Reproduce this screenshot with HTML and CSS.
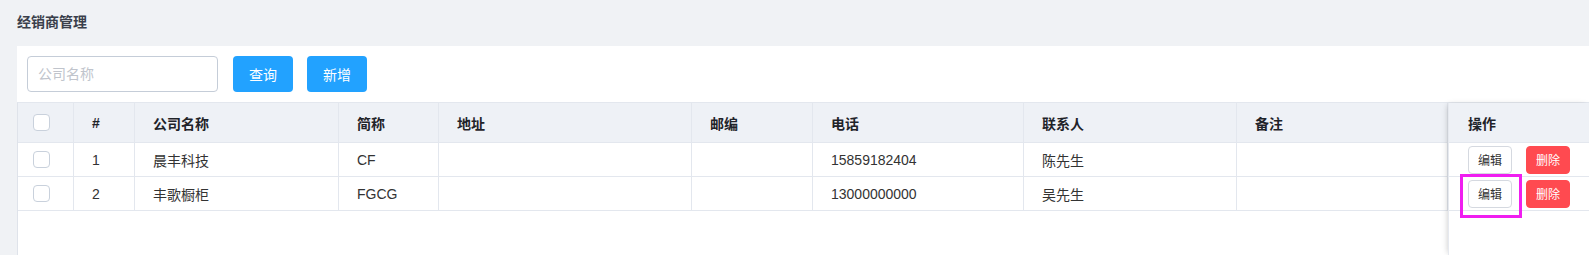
FILE: index.html
```html
<!DOCTYPE html>
<html lang="zh-CN">
<head>
<meta charset="utf-8">
<title>经销商管理</title>
<link rel="stylesheet" href="styles.css">
</head>
<body>
<div class="page">
  <div class="title">经销商管理</div>
  <div class="card">
    <div class="search">
      <input class="input" type="text" placeholder="公司名称">
      <button class="btn btn-primary">查询</button>
      <button class="btn btn-primary btn-add">新增</button>
    </div>
    <div class="table-wrap">
      <div class="main">
        <table class="grid">
          <colgroup>
            <col class="c1"><col class="c2"><col class="c3"><col class="c4"><col class="c5"><col class="c6"><col class="c7"><col class="c8"><col class="c9">
          </colgroup>
          <thead>
            <tr>
              <th class="chk-cell"><span class="checkbox"></span></th>
              <th>#</th>
              <th>公司名称</th>
              <th>简称</th>
              <th>地址</th>
              <th>邮编</th>
              <th>电话</th>
              <th>联系人</th>
              <th>备注</th>
            </tr>
          </thead>
          <tbody>
            <tr>
              <td class="chk-cell"><span class="checkbox"></span></td>
              <td>1</td>
              <td>晨丰科技</td>
              <td>CF</td>
              <td></td>
              <td></td>
              <td>15859182404</td>
              <td>陈先生</td>
              <td></td>
            </tr>
            <tr>
              <td class="chk-cell"><span class="checkbox"></span></td>
              <td>2</td>
              <td>丰歌橱柜</td>
              <td>FGCG</td>
              <td></td>
              <td></td>
              <td>13000000000</td>
              <td>吴先生</td>
              <td></td>
            </tr>
          </tbody>
        </table>
      </div>
      <div class="fixed">
        <table class="grid ops">
          <thead>
            <tr><th>操作</th></tr>
          </thead>
          <tbody>
            <tr><td><div class="actions"><button class="btn-sm btn-edit">编辑</button><button class="btn-sm btn-del">删除</button></div></td></tr>
            <tr><td><div class="actions"><span class="hl-wrap"><button class="btn-sm btn-edit">编辑</button><span class="highlight"></span></span><button class="btn-sm btn-del">删除</button></div></td></tr>
          </tbody>
        </table>
      </div>
    </div>
  </div>
</div>
</body>
</html>
```

FILE: styles.css
```css
* { box-sizing: border-box; }

html, body {
  margin: 0;
  padding: 0;
  height: 100%;
  overflow: hidden;
}

body {
  background: #f0f2f5;
  font-family: "Liberation Sans", "Noto Sans CJK SC", sans-serif;
  font-size: 14px;
  color: #333;
}

.page {
  height: 100vh;
  display: flex;
  flex-direction: column;
  padding-left: 17px;
}

.title {
  font-size: 14px;
  font-weight: bold;
  color: #3a3f4b;
  line-height: 21px;
  padding: 12px 0 13px;
}

.card {
  flex: 1;
  background: #fff;
  display: flex;
  flex-direction: column;
  min-height: 0;
}

.search {
  display: flex;
  align-items: center;
  padding: 10px 10px 10px 10px;
  height: 56px;
}

.input {
  width: 191px;
  height: 36px;
  border: 1px solid #c5cdd8;
  border-radius: 4px;
  padding: 0 10px;
  font-family: inherit;
  font-size: 14px;
  color: #333;
  outline: none;
}

.input::placeholder { color: #c0c4cc; }

.btn {
  height: 36px;
  width: 60px;
  border: none;
  border-radius: 4px;
  font-family: inherit;
  font-size: 14px;
  color: #fff;
  margin-left: 15px;
  padding: 0;
}

.btn-primary { background: #22a2ff; }
.btn-add { margin-left: 14px; }

.table-wrap {
  flex: 1;
  display: flex;
  border-top: 1px solid #e3e7ee;
  border-left: 1px solid #dfe3ea;
  min-height: 0;
}

.main {
  width: 1430px;
  flex: none;
}

.grid {
  border-collapse: separate;
  border-spacing: 0;
  table-layout: fixed;
  width: 100%;
}

.c1 { width: 56px; }
.c2 { width: 61px; }
.c3 { width: 204px; }
.c4 { width: 100px; }
.c5 { width: 253px; }
.c6 { width: 121px; }
.c7 { width: 211px; }
.c8 { width: 213px; }
.c9 { width: 211px; }

.grid th,
.grid td {
  text-align: left;
  padding: 0 18px;
  border-right: 1px solid #e3e7ee;
  border-bottom: 1px solid #e3e7ee;
  white-space: nowrap;
  vertical-align: middle;
}

.grid th {
  height: 40px;
  background: #eef1f6;
  font-weight: bold;
  color: #1f2329;
}

.grid td {
  height: 34px;
  color: #333;
}

.grid .chk-cell { padding: 0 0 0 15px; }

.checkbox {
  display: block;
  width: 17px;
  height: 17px;
  border: 1px solid #c9d1dc;
  border-radius: 4px;
  background: #fff;
}

.fixed {
  flex: 1;
  position: relative;
  z-index: 1;
  background: #fff;
  box-shadow: -2px 0 6px -2px rgba(0, 0, 0, 0.22);
  border-left: 1px solid #e6e9ef;
}

.ops th,
.ops td {
  border-right: none;
  padding: 0 0 0 19px;
}

.actions {
  display: flex;
  align-items: center;
  gap: 14px;
}

.btn-sm {
  width: 44px;
  height: 28px;
  border-radius: 4px;
  font-family: inherit;
  font-size: 12px;
  padding: 0;
}

.btn-edit {
  background: #fff;
  border: 1px solid #d5d9e0;
  color: #333;
}

.btn-del {
  background: #ff4a50;
  border: 1px solid #ff4a50;
  color: #fff;
}

.hl-wrap {
  position: relative;
  display: block;
  height: 28px;
}

.highlight {
  position: absolute;
  left: -8px;
  top: -6px;
  width: 62px;
  height: 44px;
  border: 3px solid #f01ef0;
  pointer-events: none;
}
```
